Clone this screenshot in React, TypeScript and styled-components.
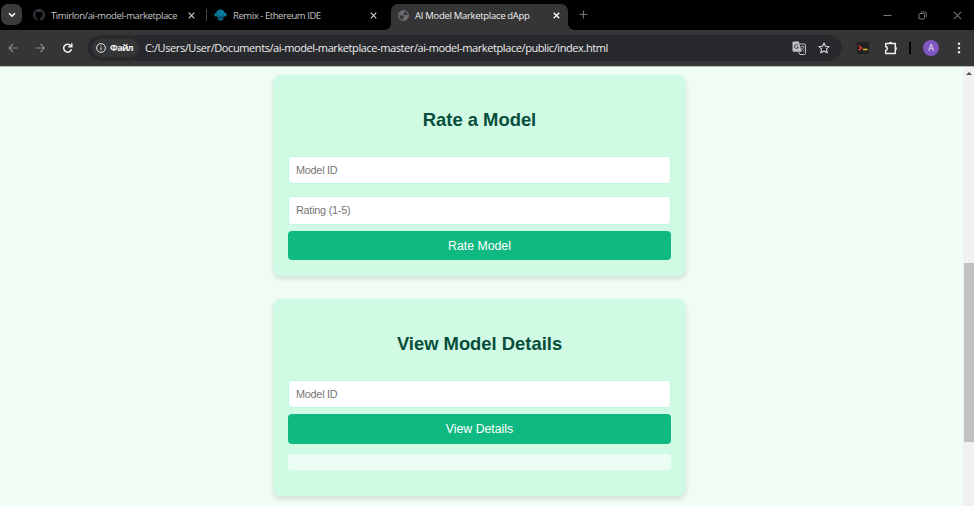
import React from "react";
import styled, { createGlobalStyle } from "styled-components";

const PageStyle = createGlobalStyle`
  * { box-sizing: border-box; }
  html, body { margin: 0; padding: 0; overflow: hidden; }
  body { font-family: "Liberation Sans", Arial, sans-serif; background: #f0fdf4; }
`;

const Window = styled.div`
  width: 974px;
  height: 506px;
  display: flex;
  flex-direction: column;
  overflow: hidden;
`;

const TabStrip = styled.header`
  height: 30px;
  flex: none;
  display: flex;
  align-items: stretch;
  background: #000;
`;

const TabSearch = styled.button`
  width: 21px;
  height: 21px;
  margin: 4px 0 0 1px;
  padding: 0;
  border: 0;
  border-radius: 7px;
  background: #3b3b3b;
  display: grid;
  place-items: center;
`;

const Tab = styled.div<{ $width: number; $inset?: number; $active?: boolean }>`
  width: ${(p) => p.$width}px;
  height: 26px;
  margin-top: 4px;
  display: flex;
  align-items: center;
  padding: 0 8px 4px ${(p) => p.$inset ?? 7}px;
  color: ${(p) => (p.$active ? "#f0f0f0" : "#c4c4c4")};
  background: ${(p) => (p.$active ? "#353535" : "transparent")};
  border-radius: 7px 7px 0 0;
`;

const TabFoot = styled.span<{ $side: "left" | "right" }>`
  width: 6px;
  height: 6px;
  align-self: flex-end;
  background: radial-gradient(
    circle at ${(p) => (p.$side === "left" ? "0 0" : "100% 0")},
    transparent 5.6px,
    #353535 6px
  );
`;

const TabTitle = styled.span<{ $spacing: number }>`
  flex: 1;
  margin-left: 6px;
  padding-top: 1px;
  font: 9.5px/14px "Open Sans", sans-serif;
  letter-spacing: ${(p) => p.$spacing}px;
  white-space: nowrap;
`;

const Separator = styled.span`
  width: 1px;
  height: 12px;
  margin: 9px 0 0 3px;
  background: #4a4a4a;
`;

const NewTab = styled.span`
  margin: 10px 0 0 5px;
  height: 10px;
  display: flex;
`;

const WindowControls = styled.div`
  margin-left: auto;
  padding-right: 12px;
  display: flex;
  align-items: center;
  gap: 26px;
`;

const Toolbar = styled.nav`
  height: 37px;
  flex: none;
  display: flex;
  align-items: center;
  padding: 0 13px 1px 7px;
  background: #353535;
  border-bottom: 1px solid #b5bab7;
`;

const NavButtons = styled.div`
  width: 81px;
  display: flex;
  align-items: center;
  gap: 14px;
`;

const AddressBar = styled.div`
  width: 754px;
  height: 26px;
  flex: none;
  border-radius: 13px;
  background: #28292c;
  display: flex;
  align-items: center;
  padding: 0 12px 0 4px;
`;

const FileChip = styled.span`
  width: 47px;
  height: 18px;
  border-radius: 9px;
  background: #353638;
  display: flex;
  align-items: center;
  gap: 4px;
  padding-left: 4px;
  color: #f2f2f2;
  font: 700 9px/14px "Open Sans", sans-serif;
  letter-spacing: -0.6px;
`;

const Url = styled.span`
  flex: 1;
  margin-left: 6px;
  color: #eeeeee;
  font: 11px/16px "Open Sans", sans-serif;
  letter-spacing: -0.41px;
  white-space: nowrap;
`;

const AddressActions = styled.span`
  display: flex;
  align-items: center;
  gap: 12px;
`;

const Extensions = styled.div`
  flex: 1;
  display: flex;
  align-items: center;
  justify-content: flex-end;
`;

const Divider = styled.span`
  width: 2px;
  height: 12px;
  margin: 0 12px 0 11px;
  background: #000;
`;

const Avatar = styled.span`
  width: 16px;
  height: 16px;
  border-radius: 50%;
  background: #7e57c2;
  color: #f3edfb;
  font: 9px/16px "Open Sans", sans-serif;
  text-align: center;
  margin-right: 18px;
`;

const Viewport = styled.div`
  flex: 1;
  min-height: 0;
  display: flex;
  background: #f0fdf4;
`;

const Content = styled.main`
  flex: 1;
  display: flex;
  flex-direction: column;
  align-items: center;
  gap: 23px;
  padding: 8px 4px 0 0;
`;

const Card = styled.section<{ $height: number }>`
  width: 413px;
  height: ${(p) => p.$height}px;
  flex: none;
  display: flex;
  flex-direction: column;
  padding: 0 15px;
  border-radius: 8px;
  background: #d1fae5;
  box-shadow: 0 3px 5px rgba(0, 0, 0, 0.12);
`;

const Heading = styled.h2`
  margin: 33px 0 25px;
  height: 23px;
  text-align: center;
  color: #064e3b;
  font: 700 18.4px/23px "Liberation Sans", Arial, sans-serif;
`;

const Field = styled.input`
  width: 100%;
  height: 28.4px;
  margin: 0 0 12px;
  padding: 0 7px 1px;
  border: 1px solid #c0f8dc;
  border-radius: 4px;
  background: #fff;
  font: 10.8px "Liberation Sans", Arial, sans-serif;
  letter-spacing: -0.22px;
  outline: none;

  &::placeholder { color: #757575; opacity: 1; }
`;

const SubmitButton = styled.button`
  width: 100%;
  height: 29.6px;
  flex: none;
  margin-top: -6px;
  padding: 0;
  border: 0;
  border-radius: 4px;
  background: #10b981;
  color: #fff;
  font: 12.3px "Liberation Sans", Arial, sans-serif;
`;

const ResultBox = styled.div`
  height: 16px;
  margin-top: 10px;
  border-radius: 4px;
  background: #ecfdf5;
`;

const Scrollbar = styled.aside`
  width: 11px;
  height: 100%;
  background: #f1f1f1;
  display: flex;
  flex-direction: column;
  align-items: center;
`;

const ScrollArrow = styled.span`
  margin-top: 5px;
  border: 3px solid transparent;
  border-top-width: 0;
  border-bottom-color: #505050;
`;

const ScrollThumb = styled.span`
  width: 10px;
  height: 179px;
  margin: 188px 0 0 1px;
  background: #c1c1c1;
`;

const CloseIcon = ({ size = 7, color = "#d8d8d8", weight = 1.2 }) => (
  <svg width={size} height={size} viewBox="0 0 8 8" stroke={color} strokeWidth={weight} fill="none">
    <path d="M.8.8l6.4 6.4M7.2.8L.8 7.2" />
  </svg>
);

const GithubIcon = () => (
  <svg width="12" height="12" viewBox="0 0 16 16" fill="#30363c">
    <path d="M8 0C3.58 0 0 3.58 0 8c0 3.54 2.29 6.53 5.47 7.59.4.07.55-.17.55-.38 0-.19-.01-.82-.01-1.49-2.01.37-2.53-.49-2.69-.94-.09-.23-.48-.94-.82-1.13-.28-.15-.68-.52-.01-.53.63-.01 1.08.58 1.23.82.72 1.21 1.87.87 2.33.66.07-.52.28-.87.51-1.07-1.78-.2-3.64-.89-3.64-3.95 0-.87.31-1.59.82-2.15-.08-.2-.36-1.02.08-2.12 0 0 .67-.21 2.2.82a7.6 7.6 0 0 1 4 0c1.53-1.04 2.2-.82 2.2-.82.44 1.1.16 1.92.08 2.12.51.56.82 1.27.82 2.15 0 3.07-1.87 3.75-3.65 3.95.29.25.54.73.54 1.48 0 1.07-.01 1.93-.01 2.2 0 .21.15.46.55.38A8 8 0 0 0 16 8c0-4.42-3.58-8-8-8z" />
  </svg>
);

const RemixIcon = () => (
  <svg width="13" height="12" viewBox="0 0 13 12">
    <path d="M2 5C2.200 2 4 .4 6.500.4S10.800 2 11 5v2L6.500 9.500 2 7z" fill="#0b7a9f" />
    <rect x=".5" y="4" width="2.200" height="3.600" rx="1" fill="#0b7a9f" />
    <rect x="10.300" y="4" width="2.200" height="3.600" rx="1" fill="#0b7a9f" />
    <path d="M3.500 6.300L6.500 8.300l3-2" fill="none" stroke="#032c3c" strokeWidth=".7" />
    <path d="M3.300 8.300l3.200 1.800 3.200-1.800-.5 2-2.700 1.400-2.700-1.400z" fill="#0b7a9f" />
  </svg>
);

const GlobeIcon = () => (
  <svg width="11" height="11" viewBox="0 0 11 11">
    <circle cx="5.500" cy="5.500" r="5.400" fill="#6b6f74" />
    <path d="M1.200 5.200l2.600.1 1.500.7.700 1-.9.7v1.900C2.700 9.500 1.200 7.500 1.200 5.200zM6.500 1.300c1.700.5 2.900 1.900 3.200 3.600L7.800 5.300l-2-.2-.9-1 1.300-.6z" fill="#353535" />
  </svg>
);

const TranslateIcon = () => (
  <svg width="14" height="14" viewBox="0 0 14 14">
    <path d="M1.500.5h5.300l2.800 10.300H1.500A1 1 0 0 1 .5 9.800V1.500a1 1 0 0 1 1-1z" fill="#bfc1c3" />
    <path d="M7.500 3h5a1 1 0 0 1 1 1v8.500a1 1 0 0 1-1 1H8L6.500 10.800" fill="none" stroke="#bfc1c3" />
    <path d="M5.900 4.200A2 2 0 1 0 6.300 6H4.600" fill="none" stroke="#28292c" strokeWidth=".8" />
    <path d="M8.600 5.600h4M10.500 4.800v.8M11.800 5.600c-.3 1.700-1.400 3.200-2.600 4.200M9.100 6.700c.7 1.500 1.500 2.400 3 3.500" fill="none" stroke="#bfc1c3" strokeWidth=".7" />
  </svg>
);

const StarIcon = () => (
  <svg width="12" height="12" viewBox="0 0 12 12" fill="none" stroke="#d7d8d9" strokeWidth="1.100" strokeLinejoin="round">
    <path d="M6 1l1.500 3.300 3.600.4-2.700 2.400.8 3.600L6 8.900l-3.200 1.800.8-3.600L.9 4.700l3.600-.4z" />
  </svg>
);

const TerminalIcon = () => (
  <svg width="12" height="12" viewBox="0 0 12 12">
    <rect width="12" height="12" rx="1.500" fill="#1f2020" />
    <path d="M1.700 3.700L4.500 6 1.700 8.300" fill="none" stroke="#e03d35" strokeWidth="1.500" />
    <path d="M6 7.500h4.500" stroke="#e8b61c" strokeWidth="1.600" />
  </svg>
);

const PuzzleIcon = () => (
  <svg width="14" height="14" viewBox="0 0 14 14">
    <path d="M1.700 2.500h9.600v10H1.700V9.200a1.700 1.700 0 0 0 0-3.400z" fill="none" stroke="#eeeeee" strokeWidth="1.500" strokeLinejoin="round" />
    <path d="M4.800 2.500a1.700 1.700 0 0 1 3.400 0zM11.300 5.800a1.700 1.700 0 0 1 0 3.400z" fill="#eeeeee" />
  </svg>
);

interface ModelCardProps {
  title: string;
  fields: string[];
  action: string;
  height: number;
  showResult?: boolean;
}

const ModelCard = ({ title, fields, action, height, showResult }: ModelCardProps) => (
  <Card $height={height}>
    <Heading>{title}</Heading>
    {fields.map((placeholder) => (
      <Field key={placeholder} placeholder={placeholder} />
    ))}
    <SubmitButton>{action}</SubmitButton>
    {showResult && <ResultBox />}
  </Card>
);

export default function App() {
  return (
    <Window>
      <PageStyle />
      <TabStrip>
        <TabSearch aria-label="Search tabs">
          <svg width="8" height="6" viewBox="0 0 8 6" fill="none" stroke="#fff" strokeWidth="1.500">
            <path d="M1 1.300l3 3 3-3" />
          </svg>
        </TabSearch>
        <Tab $width={181} $inset={11}>
          <GithubIcon />
          <TabTitle $spacing={-0.38}>Timirlon/ai-model-marketplace</TabTitle>
          <CloseIcon />
        </Tab>
        <Separator />
        <Tab $width={178} $inset={7}>
          <RemixIcon />
          <TabTitle $spacing={-0.43}>Remix - Ethereum IDE</TabTitle>
          <CloseIcon />
        </Tab>
        <TabFoot $side="left" />
        <Tab $width={177} $inset={7} $active>
          <GlobeIcon />
          <TabTitle $spacing={-0.3}>AI Model Marketplace dApp</TabTitle>
          <CloseIcon color="#fff" weight={1.4} />
        </Tab>
        <TabFoot $side="right" />
        <NewTab>
          <svg width="9" height="9" viewBox="0 0 9 9" stroke="#777" strokeWidth="1.100">
            <path d="M4.500.5v8M.5 4.500h8" />
          </svg>
        </NewTab>
        <WindowControls>
          <svg width="9" height="9" viewBox="0 0 9 9" stroke="#777"><path d="M.5 4.500h8" /></svg>
          <svg width="9" height="9" viewBox="0 0 9 9" stroke="#777" fill="none">
            <rect x="1" y="2.500" width="5.500" height="5.500" rx="1" />
            <path d="M2.800 1h4a1.400 1.400 0 0 1 1.400 1.400v3.800" />
          </svg>
          <CloseIcon size={9} color="#777" weight={0.9} />
        </WindowControls>
      </TabStrip>
      <Toolbar>
        <NavButtons>
          <svg width="13" height="12" viewBox="0 0 13 12" fill="none" stroke="#858585" strokeWidth="1.200">
            <path d="M11 6H2M6 2L2 6l4 4" />
          </svg>
          <svg width="13" height="12" viewBox="0 0 13 12" fill="none" stroke="#858585" strokeWidth="1.200">
            <path d="M1.500 6h9M6.500 2l4 4-4 4" />
          </svg>
          <svg width="13" height="12" viewBox="0 0 13 12" fill="none" stroke="#f2f2f2" strokeWidth="1.500">
            <path d="M10.500 7.300A4 4 0 1 1 9.600 3.400L10.600 4.500M10.800 1.200v3.500H7.300" />
          </svg>
        </NavButtons>
        <AddressBar>
          <FileChip>
            <svg width="10" height="10" viewBox="0 0 10 10" fill="none" stroke="#e4e4e4">
              <circle cx="5" cy="5" r="4.400" />
              <path d="M5 4.400v3M5 2.500v1" />
            </svg>
            Файл
          </FileChip>
          <Url>C:/Users/User/Documents/ai-model-marketplace-master/ai-model-marketplace/public/index.html</Url>
          <AddressActions>
            <TranslateIcon />
            <StarIcon />
          </AddressActions>
        </AddressBar>
        <Extensions>
          <TerminalIcon />
          <svg width="15" height="1" />
          <PuzzleIcon />
          <Divider />
          <Avatar>A</Avatar>
          <svg width="4" height="12" viewBox="0 0 4 12" fill="#f0f0f0">
            <circle cx="2" cy="1.700" r="1.200" />
            <circle cx="2" cy="6" r="1.200" />
            <circle cx="2" cy="10.300" r="1.200" />
          </svg>
        </Extensions>
      </Toolbar>
      <Viewport>
        <Content>
          <ModelCard title="Rate a Model" fields={["Model ID", "Rating (1-5)"]} action="Rate Model" height={201} />
          <ModelCard title="View Model Details" fields={["Model ID"]} action="View Details" height={197} showResult />
        </Content>
        <Scrollbar>
          <ScrollArrow />
          <ScrollThumb />
        </Scrollbar>
      </Viewport>
    </Window>
  );
}
